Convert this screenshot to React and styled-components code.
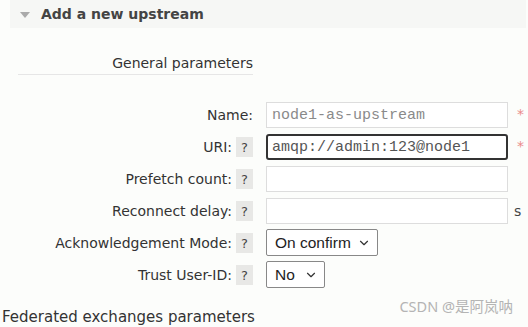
import React from 'react';
import styled, { createGlobalStyle } from 'styled-components';
import { ChevronDown } from 'lucide-react';

const GlobalStyle = createGlobalStyle`
  html, body {
    margin: 0;
    padding: 0;
    background: #fcfdfb;
  }
  body {
    font-family: "DejaVu Sans", Verdana, sans-serif;
    color: #333;
  }
`;

const Page = styled.div`
  position: relative;
  width: 528px;
  height: 327px;
  overflow: hidden;
`;

const Header = styled.div`
  display: flex;
  align-items: center;
  gap: 11px;
  margin-left: 10px;
  width: 516px;
  height: 28px;
  padding-left: 10px;
  box-sizing: border-box;
  background: #f6f7f5;
`;

const Triangle = styled.span`
  width: 0;
  height: 0;
  border-left: 5px solid transparent;
  border-right: 5px solid transparent;
  border-top: 6px solid #aaa;
  margin-top: 1px;
`;

const Title = styled.h2`
  margin: 0;
  font-size: 14px;
  font-weight: bold;
  color: #444;
`;

const Legend = styled.div`
  margin: 27px 0 0 18px;
  width: 235px;
  text-align: right;
  font-size: 14px;
  line-height: 17px;
  padding-bottom: 2px;
  border-bottom: 1px solid #e6e6e6;
`;

const Form = styled.div`
  display: grid;
  grid-template-columns: 253px 242px auto;
  column-gap: 13px;
  row-gap: 6px;
  margin-top: 27px;
`;

const LabelCell = styled.div`
  display: flex;
  justify-content: flex-end;
  align-items: center;
  gap: 4px;
  font-size: 14px;
`;

const Help = styled.span`
  display: inline-flex;
  align-items: center;
  justify-content: center;
  width: 17px;
  height: 20px;
  background: #e8e8e6;
  font-size: 13px;
  color: #444;
`;

const Field = styled.div`
  height: 26px;
  box-sizing: border-box;
  background: #fff;
  border: ${p => (p.$focus ? '2px solid #333' : '1px solid #ddd')};
  border-radius: ${p => (p.$focus ? '3px' : '0')};
  padding-left: ${p => (p.$focus ? '4px' : '5px')};
  display: flex;
  align-items: center;
  font-family: "Liberation Mono", "Courier New", monospace;
  font-size: 15px;
  color: ${p => (p.$focus ? '#555' : '#8a8a8a')};
`;

const Suffix = styled.div`
  display: flex;
  align-items: ${p => (p.$star ? 'flex-start' : 'center')};
  padding-top: ${p => (p.$star ? '4px' : '0')};
  margin-left: ${p => (p.$star ? '-4px' : '-7px')};
  font-size: 14px;
  color: ${p => (p.$star ? '#ea8a8a' : '#444')};
`;

const SelectBox = styled.div`
  justify-self: start;
  height: 27px;
  margin-top: -1px;
  box-sizing: border-box;
  display: flex;
  align-items: center;
  gap: ${p => (p.$short ? '9px' : '6px')};
  padding: 0 6px 0 8px;
  background: #fff;
  border: 1px solid #888;
  border-radius: 2px;
  font-family: "Liberation Sans", Arial, sans-serif;
  font-size: 15.5px;
  color: #222;
`;

const Footer = styled.div`
  margin: 20px 0 0 2px;
  font-size: 15px;
  line-height: 18px;
`;

const Watermark = styled.div`
  position: absolute;
  right: 15px;
  bottom: 11px;
  font-family: "Noto Sans", "Noto Sans CJK SC", sans-serif;
  font-size: 14.5px;
  color: #b4b4b4;
`;

const rows = [
  { label: 'Name:', help: false, value: 'node1-as-upstream', star: true },
  { label: 'URI:', help: true, value: 'amqp://admin:123@node1', star: true, focus: true },
  { label: 'Prefetch count:', help: true, value: '' },
  { label: 'Reconnect delay:', help: true, value: '', suffix: 's' },
];

const selects = [
  { label: 'Acknowledgement Mode:', value: 'On confirm' },
  { label: 'Trust User-ID:', value: 'No', short: true },
];

export default function App() {
  return (
    <Page>
      <GlobalStyle />
      <Header>
        <Triangle />
        <Title>Add a new upstream</Title>
      </Header>
      <Legend>General parameters</Legend>
      <Form>
        {rows.map(r => (
          <React.Fragment key={r.label}>
            <LabelCell>
              {r.label}
              {r.help && <Help>?</Help>}
            </LabelCell>
            <Field $focus={r.focus}>{r.value}</Field>
            {r.star ? <Suffix $star>*</Suffix> : <Suffix>{r.suffix}</Suffix>}
          </React.Fragment>
        ))}
        {selects.map(s => (
          <React.Fragment key={s.label}>
            <LabelCell>
              {s.label}
              <Help>?</Help>
            </LabelCell>
            <SelectBox $short={s.short}>
              {s.value}
              <ChevronDown size={14} strokeWidth={2} color="#333" />
            </SelectBox>
            <span />
          </React.Fragment>
        ))}
      </Form>
      <Footer>Federated exchanges parameters</Footer>
      <Watermark>CSDN @是阿岚呐</Watermark>
    </Page>
  );
}
